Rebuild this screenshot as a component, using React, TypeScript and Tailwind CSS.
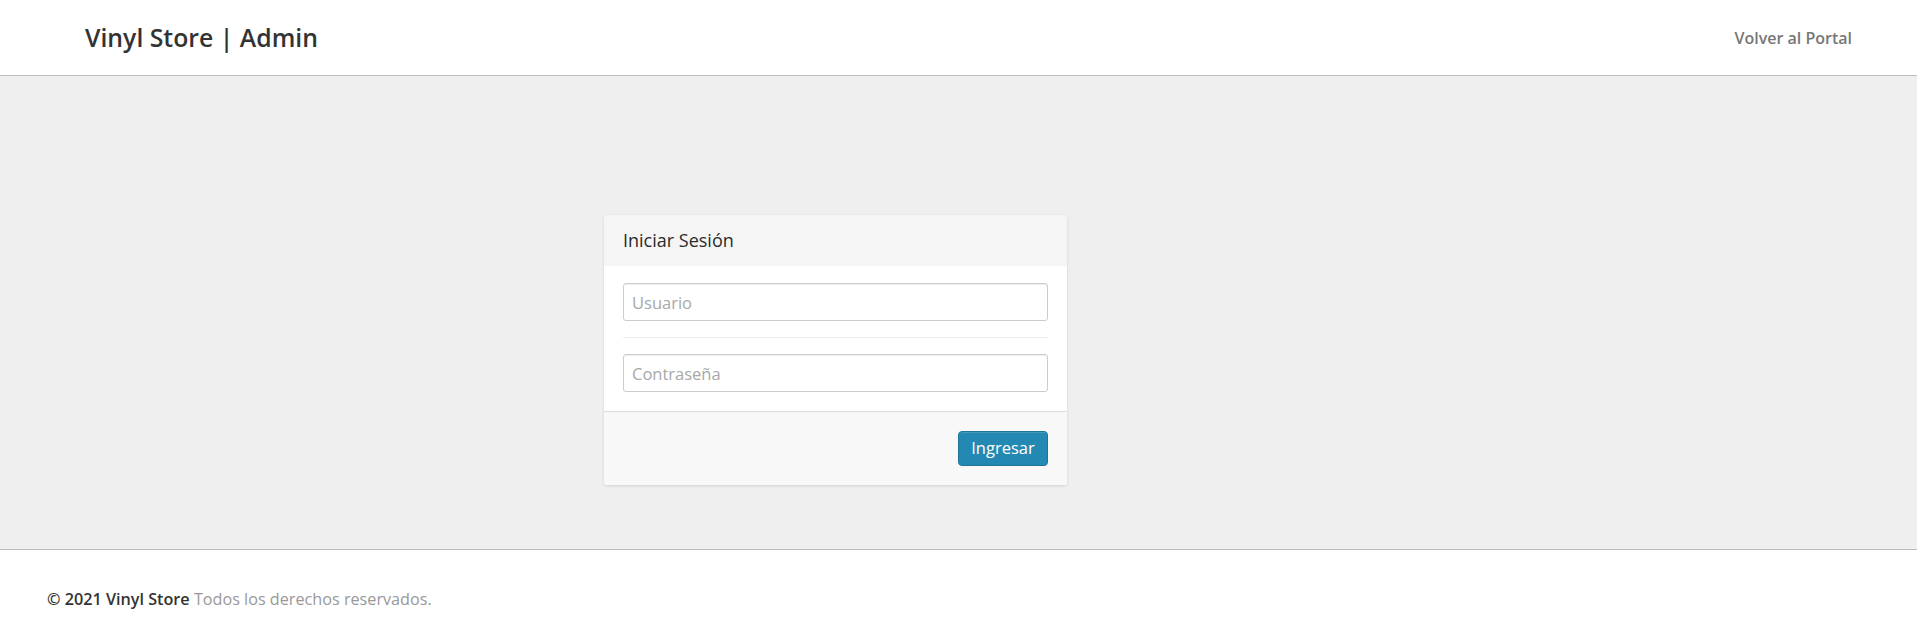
const font = { fontFamily: '"Open Sans", "Noto Sans", sans-serif' };

function Header() {
  return (
    <header className="flex h-[76px] items-center justify-between border-b border-[#bdbdbd] bg-white pr-[65px] pl-[85px]">
      <a href="#" className="text-[24.8px] font-semibold text-[#333]">
        Vinyl Store | Admin
      </a>
      <a href="#" className="text-[16px] font-semibold text-[#777]">
        Volver al Portal
      </a>
    </header>
  );
}

function LoginCard() {
  return (
    <div className="w-[463px] overflow-hidden rounded-[3px] bg-white shadow-[0_1px_3px_rgba(0,0,0,0.12)]">
      <div className="flex h-[51px] items-center bg-[#f5f5f5] px-[19px]">
        <h3 className="text-[18px] font-medium text-[#2b2b2b]">Iniciar Sesión</h3>
      </div>
      <form className="px-[19px] pt-[17px] pb-[19px]">
        <input
          type="text"
          placeholder="Usuario"
          className="block h-[38px] w-full rounded-[3px] border border-[#ccc] px-[8px] text-[16.5px] text-[#555] shadow-[inset_0_1px_1px_rgba(0,0,0,0.075)] outline-none placeholder:text-[#a8a8a8]"
        />
        <hr className="my-[16px] border-[#eee]" />
        <input
          type="password"
          placeholder="Contraseña"
          className="block h-[38px] w-full rounded-[3px] border border-[#ccc] px-[8px] text-[16.5px] text-[#555] shadow-[inset_0_1px_1px_rgba(0,0,0,0.075)] outline-none placeholder:text-[#a8a8a8]"
        />
      </form>
      <div className="flex h-[74px] items-center justify-end border-t border-[#ddd] bg-[#f8f8f8] px-[19px]">
        <button
          type="button"
          className="h-[35px] w-[90px] rounded-[4px] border border-[#1f7599] bg-[#2489b2] text-[16.5px] text-white shadow-[inset_0_1px_0_rgba(255,255,255,0.15)]">
          Ingresar
        </button>
      </div>
    </div>
  );
}

function Footer() {
  return (
    <footer className="h-[76px] border-t border-[#bdbdbd] bg-white pt-[37px] pl-[47px] text-[16.2px]">
      <p>
        <span className="font-semibold text-[#333]">© 2021 Vinyl Store</span>{" "}
        <span className="text-[#999]">Todos los derechos reservados.</span>
      </p>
    </footer>
  );
}

export default function App() {
  return (
    <div style={font} className="min-h-screen bg-white">
      <Header />
      <main className="h-[473px] bg-[#efefef] pt-[139px] pl-[604px]">
        <LoginCard />
      </main>
      <Footer />
    </div>
  );
}
